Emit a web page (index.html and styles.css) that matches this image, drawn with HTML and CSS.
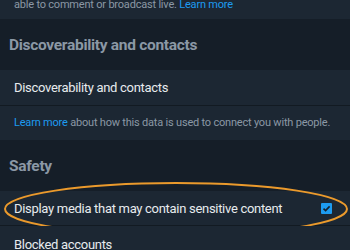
FILE: index.html
```html
<!DOCTYPE html>
<html>
<head>
<meta charset="utf-8">
<link rel="stylesheet" href="styles.css">
</head>
<body>
<div class="page">
  <div class="note top">able to comment or broadcast live. <span class="link">Learn more</span></div>
  <div class="header">Discoverability and contacts</div>
  <div class="row">Discoverability and contacts</div>
  <div class="note learn"><span class="link">Learn more</span> about how this data is used to connect you with people.</div>
  <div class="header">Safety</div>
  <div class="row sensitive">
    <span>Display media that may contain sensitive content</span>
    <span class="check"><svg width="11" height="11" viewBox="0 0 11 11"><rect width="11" height="11" rx="1" fill="#1d9bf0"/><path d="M2.5 5.6 L4.6 7.6 L8.6 3.4" fill="none" stroke="#15202b" stroke-width="1.6"/></svg></span>
    <svg class="circle" width="350" height="70" viewBox="0 0 350 70"><ellipse cx="176" cy="36" rx="171" ry="26" fill="none" stroke="#eb9a2c" stroke-width="2"/></svg>
  </div>
  <div class="row last">Blocked accounts</div>
</div>
</body>
</html>
```
FILE: styles.css
```css
html, body { margin: 0; padding: 0; }
body { background: #1c2733; font-family: Roboto, "Noto Sans", sans-serif; width: 350px; height: 250px; overflow: hidden; }
.page { display: flex; flex-direction: column; }
.note { color: #8b98a5; font-size: 11px; letter-spacing: -0.2px; padding: 0 14px; background: #1c2733; white-space: nowrap; }
.note.top { height: 19px; line-height: 9px; }
.note.learn { height: 34px; line-height: 34px; }
.link { color: #1d9bf0; }
.header { background: #151e28; color: #8b98a5; font-weight: 700; font-size: 15.5px; letter-spacing: -0.3px; height: 51px; line-height: 52px; padding: 0 9px; }
.row { background: #1c2733; color: #e7ebee; font-size: 13px; letter-spacing: -0.3px; height: 36px; box-sizing: border-box; display: flex; align-items: center; padding: 0 14px; border-bottom: 1px solid #121a22; position: relative; }
.sensitive { justify-content: space-between; height: 35px; }
.check { display: flex; margin-right: 4px; }
.circle { position: absolute; left: 0; top: -18px; pointer-events: none; }
.last { border-bottom: none; }
```
